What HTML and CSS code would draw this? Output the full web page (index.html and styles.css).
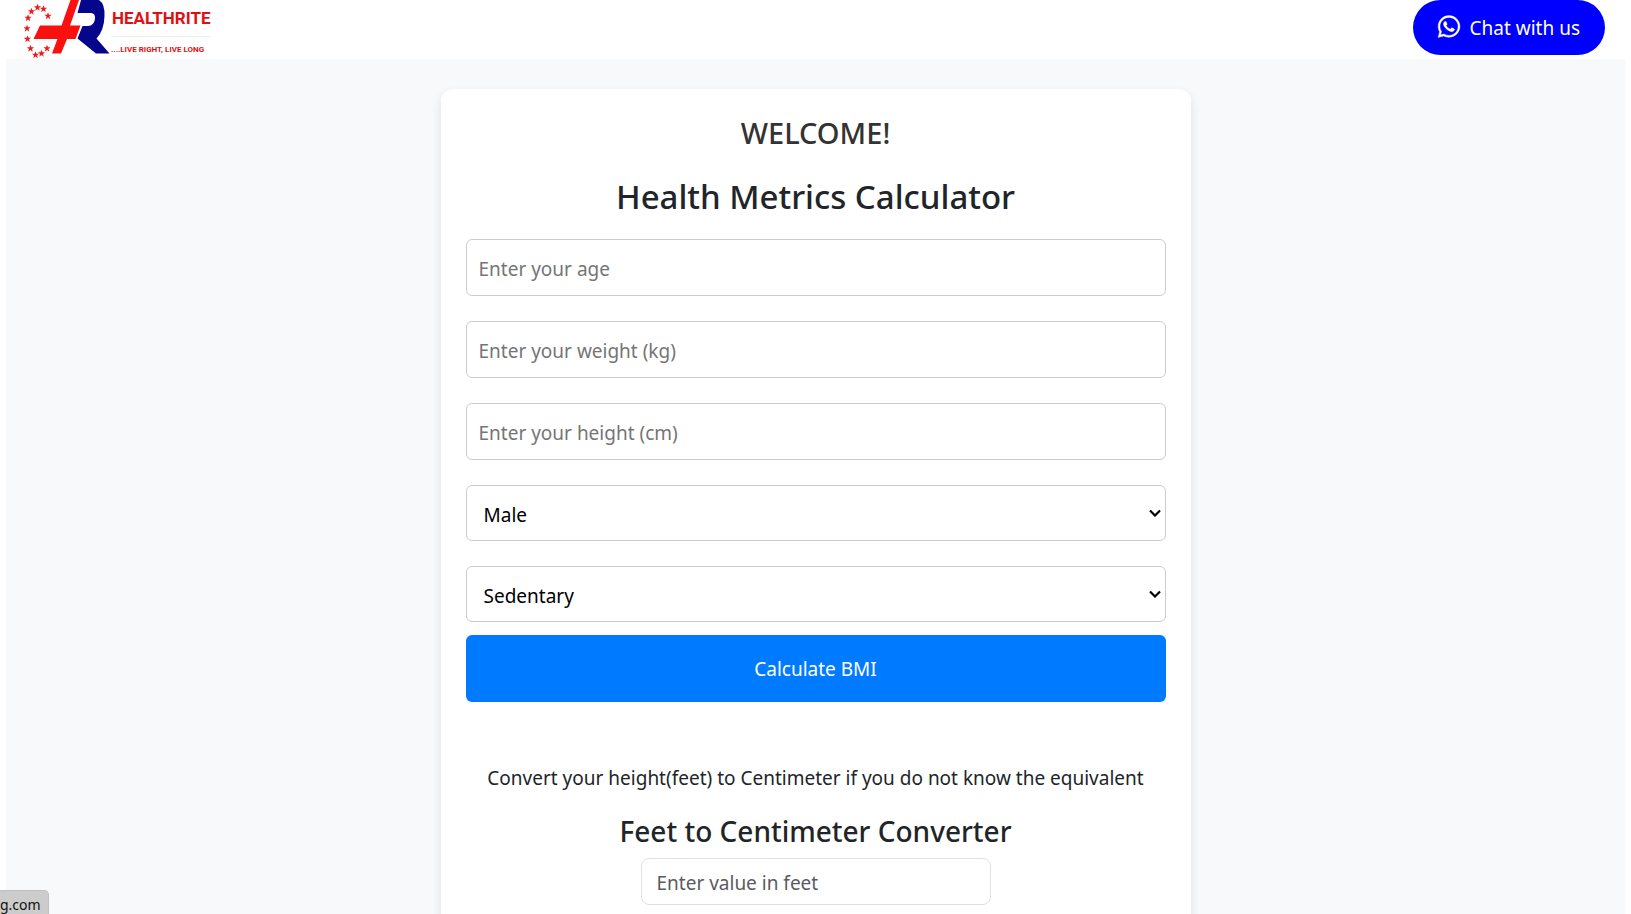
FILE: index.html
```html
<!DOCTYPE html>
<html lang="en">
<head>
<meta charset="utf-8">
<meta name="viewport" content="width=device-width, initial-scale=1">
<title>Health Metrics Calculator</title>
<link rel="stylesheet" href="styles.css">
</head>
<body>
<header class="topbar">
  <a class="brand" href="#" aria-label="Healthrite home">
    <svg class="brand-mark" viewBox="0 0 86 59" width="86" height="59" aria-hidden="true">
      <defs>
        <path id="star" d="M0-3.800 1-1.200 3.600-1.200 1.500.5 2.300 3.200 0 1.600-2.300 3.200-1.500.5-3.600-1.200-1-1.200z"/>
      </defs>
      <g fill="#ee1c1c">
        <use href="#star" x="24" y="16"/><use href="#star" x="19.500" y="9"/>
        <use href="#star" x="13.500" y="7.500"/><use href="#star" x="7.500" y="11.500"/>
        <use href="#star" x="4" y="18"/><use href="#star" x="3" y="28.500"/>
        <use href="#star" x="3.500" y="39"/><use href="#star" x="6.500" y="48.500"/>
        <use href="#star" x="11.500" y="55"/><use href="#star" x="17.500" y="53.500"/>
        <use href="#star" x="23" y="48.500"/>
      </g>
      <path fill="#fb1010" d="M46.500 0H55L46 25.500H56.500L51.500 39H43L37 53.500H28L33.500 39H9.500L16 25.500H37.500z"/>
      <path fill="#06068c" d="M57 0H75Q81 4 80.500 16Q80 31 72.500 38.500L85.500 53.500H72L53.500 38.500L58.500 26H64Q70 25.500 71 19Q71.500 13 67 13H53.500z"/>
    </svg>
    <span class="brand-text">
      <span class="brand-name">HEALTHRITE</span>
      <span class="brand-tag">....LIVE RIGHT, LIVE LONG</span>
    </span>
  </a>
  <a class="chat" href="#">
    <svg class="chat-icon" viewBox="0 0 448 512" width="22" height="25" fill="#fff" stroke="#fff" stroke-width="8" aria-hidden="true"><path d="M380.900 97.100C339 55.100 283.200 32 223.900 32c-122.400 0-222 99.600-222 222 0 39.100 10.200 77.300 29.600 111L0 480l117.700-30.900c32.400 17.700 68.900 27 106.100 27h.1c122.300 0 224.100-99.600 224.100-222 0-59.300-25.200-115-67.100-157zm-157 341.600c-33.200 0-65.700-8.900-94-25.700l-6.700-4-69.800 18.300L72 359.200l-4.400-7c-18.500-29.400-28.200-63.300-28.200-98.200 0-101.700 82.800-184.500 184.600-184.500 49.300 0 95.600 19.200 130.400 54.100 34.800 34.900 56.200 81.200 56.100 130.500 0 101.800-84.900 184.600-186.600 184.600zm101.200-138.200c-5.500-2.800-32.800-16.200-37.900-18-5.100-1.900-8.800-2.800-12.500 2.800-3.700 5.600-14.300 18-17.600 21.800-3.200 3.700-6.500 4.200-12 1.400-32.600-16.300-54-29.100-75.500-66-5.700-9.800 5.700-9.100 16.300-30.300 1.800-3.700.9-6.900-.5-9.700-1.400-2.800-12.500-30.100-17.100-41.200-4.500-10.800-9.100-9.300-12.500-9.500-3.200-.2-6.900-.2-10.600-.2-3.700 0-9.700 1.400-14.800 6.900-5.100 5.600-19.400 19-19.400 46.300 0 27.300 19.900 53.700 22.600 57.400 2.800 3.700 39.100 59.700 94.800 83.800 35.200 15.200 49 16.500 66.600 13.900 10.700-1.600 32.800-13.400 37.400-26.400 4.600-13 4.600-24.100 3.200-26.400-1.300-2.500-5-3.900-10.500-6.600z"/></svg>
    <span>Chat with us</span>
  </a>
</header>
<main class="page">
  <section class="card">
    <h2 class="welcome">WELCOME!</h2>
    <h1 class="title">Health Metrics Calculator</h1>
    <form class="metrics">
      <input class="field" type="text" aria-label="Age" placeholder="Enter your age">
      <input class="field" type="text" aria-label="Weight" placeholder="Enter your weight (kg)">
      <input class="field" type="text" aria-label="Height" placeholder="Enter your height (cm)">
      <select class="field field-select" aria-label="Gender"><option>Male</option><option>Female</option></select>
      <select class="field field-select" aria-label="Activity level"><option>Sedentary</option><option>Active</option></select>
      <button class="submit" type="button">Calculate BMI</button>
    </form>
    <p class="hint">Convert your height(feet) to Centimeter if you do not know the equivalent</p>
    <h2 class="subtitle">Feet to Centimeter Converter</h2>
    <input class="feet" type="text" aria-label="Feet" placeholder="Enter value in feet">
  </section>
</main>
<div class="status">g.com</div>
</body>
</html>
```
FILE: styles.css
```css
* { box-sizing: border-box; }
body {
  margin: 0;
  height: 100vh;
  overflow: hidden;
  display: flex;
  flex-direction: column;
  background: #fff;
  color: #212529;
  font-family: "Noto Sans", "Open Sans", sans-serif;
  font-size: 19px;
  line-height: 30px;
}
.topbar {
  flex: none;
  display: flex;
  justify-content: space-between;
  align-items: flex-start;
  height: 59px;
  padding: 0 26px 0 24px;
}
.brand { display: flex; text-decoration: none; color: #e01010; }
.brand-text {
  display: flex;
  flex-direction: column;
  align-items: flex-start;
  padding: 6px 0 0 1px;
  font-family: Roboto, "Open Sans", sans-serif;
  font-weight: 700;
  white-space: nowrap;
}
.brand-name {
  padding: 0 0 6px 1px;
  border-bottom: 1px solid #eee;
  font-size: 17px;
  line-height: 24px;
}
.brand-tag { padding-top: 5px; font-size: 8px; line-height: 16px; }
.chat {
  display: flex;
  align-items: center;
  gap: 10px;
  height: 55px;
  padding: 0 25px;
  border-radius: 28px;
  background: #00f;
  color: #fff;
  text-decoration: none;
  white-space: nowrap;
}
.chat-icon { margin-bottom: 2px; overflow: visible; }
.page {
  flex: none;
  margin: 0 6px;
  padding: 30px 0;
  background: #f8f9fb;
}
.card {
  display: flex;
  flex-direction: column;
  align-items: center;
  max-width: 750px;
  margin: 0 auto;
  padding: 25px;
  border-radius: 12px;
  background: #fff;
  box-shadow: 0 5px 12px rgba(0, 0, 0, 0.1);
}
.welcome, .title, .subtitle { margin: 0; text-align: center; font-weight: 500; }
.welcome { color: #333; font-size: 29px; line-height: 38px; }
.title { margin: 24px 0 21px; font-size: 33px; line-height: 42px; }
.subtitle { margin: 20px 0 9px; font-size: 28px; line-height: 36px; }
.metrics { display: flex; flex-direction: column; width: 100%; }
.field {
  width: 100%;
  height: 57px;
  margin-bottom: 25px;
  padding: 3px 12px 0;
  border: 1px solid #ccc;
  border-radius: 6px;
  background: #fff;
  color: #000;
  font: inherit;
}
.field::placeholder { color: #757575; }
.field-select {
  height: 56px;
  padding: 3px 24px 0 17px;
  appearance: none;
  background: #fff url("data:image/svg+xml,%3Csvg xmlns='http://www.w3.org/2000/svg' width='12' height='8'%3E%3Cpath d='M1 1.500 6 6.500 11 1.500' fill='none' stroke='%23000' stroke-width='2.200'/%3E%3C/svg%3E") no-repeat right 4px center;
}
.field-select:last-of-type { margin-bottom: 13px; }
.submit {
  height: 67px;
  border: 0;
  border-radius: 6px;
  background: #007bff;
  color: #fff;
  font: inherit;
}
.hint { margin: 61px 0 0; text-align: center; }
.feet {
  width: 50%;
  height: 47px;
  padding: 3px 15px 0;
  border: 1px solid #dee2e6;
  border-radius: 8px;
  font: inherit;
}
.feet::placeholder { color: #595c5f; }
.status {
  position: fixed;
  left: 0;
  bottom: 0;
  height: 24px;
  padding: 4px 7px 0 0;
  border: 1px solid #c0c0c0;
  border-width: 1px 1px 0 0;
  border-radius: 0 5px 0 0;
  background: #ccc;
  color: #111;
  font-size: 14px;
  line-height: 20px;
}
```
